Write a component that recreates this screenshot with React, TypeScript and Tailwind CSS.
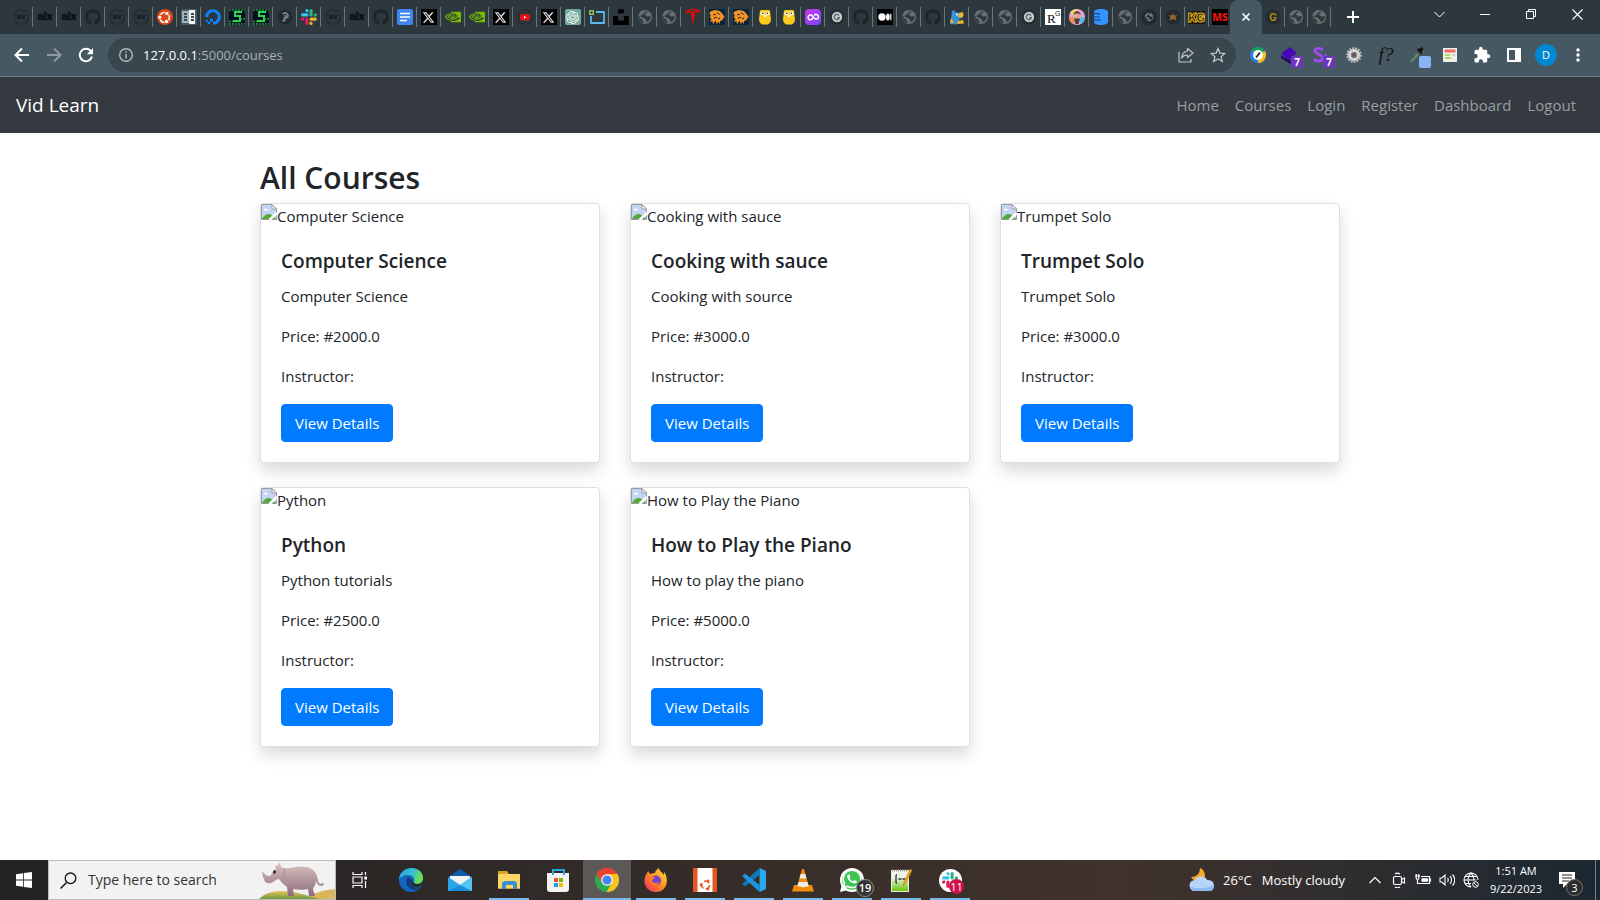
import React from "react";
import {
  FaGithub,
  FaUbuntu,
  FaDigitalOcean,
  FaXTwitter,
  FaUnsplash,
  FaWhatsapp,
} from "react-icons/fa6";
import { SiNvidia, SiOpenai, SiTesla } from "react-icons/si";
import { MdExtension } from "react-icons/md";

const UI_FONT = "font-['Segoe_UI','Open_Sans',sans-serif]";

function Svg({ size = 16, box = 16, label, children }: { size?: number; box?: number; label?: string; children: React.ReactNode }) {
  return (
    <svg width={size} height={size} viewBox={`0 0 ${box} ${box}`} fill="none" role={label ? "img" : undefined} aria-label={label} aria-hidden={label ? undefined : true} className="block shrink-0">
      {children}
    </svg>
  );
}

/* ---------- favicons ---------- */

const AlxRing = () => (
  <Svg>
    <circle cx="8" cy="8" r="7.2" stroke="#1f272b" strokeWidth="1.3" strokeDasharray="9 1.5" />
    <text x="8" y="10" fontSize="6" fontWeight="800" textAnchor="middle" fill="#13181a" fontFamily="Inter, sans-serif">alx</text>
  </Svg>
);
const Alx = () => (
  <Svg>
    <text x="8" y="11" fontSize="10" fontWeight="900" textAnchor="middle" fill="#0f1214" stroke="#0f1214" strokeWidth=".4" fontFamily="Inter, sans-serif">alx</text>
  </Svg>
);
const Github = () => <FaGithub size={16} color="#1d2427" />;
const Ubuntu = () => (
  <span className="flex size-4 items-center justify-center rounded-full bg-[#dd4814]">
    <FaUbuntu size={13} color="#fff" />
  </span>
);
const Panels = () => (
  <Svg>
    <path d="M0 0h16v16H0z" fill="#4b5a63" />
    <path d="M1 2h7v12H1z" fill="#9fb4c0" />
    <path d="M8 1h6v14H8z" fill="#f4f6f7" />
    <path d="M3 4h3v2H3zM3 7h3v2H3zM3 10h3v2H3zM10 4h3v2h-3zM10 7h3v2h-3zM10 10h3v2h-3z" fill="#3c474e" />
  </Svg>
);
const Ocean = () => <FaDigitalOcean size={16} color="#0a84ff" />;
const GreenS = () => (
  <Svg>
    <path d="M0 0h16v16H0z" fill="#08101f" />
    <path d="M0 1h16M0 12.500h5M11 10h5M0 15h16" stroke="#239844" strokeWidth="1.600" strokeDasharray="2 1" />
    <path d="M13 3H6v4h5v5H4" stroke="#2bd450" strokeWidth="2" />
  </Svg>
);
const Curl = () => (
  <Svg>
    <circle cx="8" cy="8" r="7.500" fill="#222a2e" />
    <path d="M6 4.500c4-1.500 6.500 2 4 4l-3 1M7.500 7H9M6 12l2-1" stroke="#8a9195" strokeWidth="1.500" strokeLinecap="round" />
  </Svg>
);
const SlackMark = () => (
  <g>
    <path d="M5.900 0a1.600 1.600 0 0 0 0 3.200h1.600V1.600A1.600 1.600 0 0 0 5.900 0zM1.700 4.300h4.200a1.600 1.600 0 0 1 0 3.200H1.700a1.600 1.600 0 0 1 0-3.200z" fill="#36c5f0" />
    <path d="M16 5.900a1.600 1.600 0 0 0-3.200 0v1.600h1.600A1.600 1.600 0 0 0 16 5.900zM11.700 1.700v4.200a1.600 1.600 0 0 1-3.200 0V1.700a1.600 1.600 0 0 1 3.200 0z" fill="#2eb67d" />
    <path d="M10.100 16a1.600 1.600 0 0 0 0-3.200H8.500v1.600a1.600 1.600 0 0 0 1.600 1.600zM14.300 11.700h-4.200a1.600 1.600 0 0 1 0-3.200h4.200a1.600 1.600 0 0 1 0 3.200z" fill="#ecb22e" />
    <path d="M0 10.100a1.600 1.600 0 0 0 3.200 0V8.500H1.600A1.600 1.600 0 0 0 0 10.100zM4.300 14.300v-4.200a1.600 1.600 0 0 1 3.200 0v4.200a1.600 1.600 0 0 1-3.200 0z" fill="#e01e5a" />
  </g>
);
const Slack = () => <Svg><SlackMark /></Svg>;
const Docs = () => (
  <Svg>
    <rect width="16" height="16" rx="2" fill="#4285f4" />
    <path d="M3 4.500h10M3 8h10M3 11.500h7" stroke="#fff" strokeWidth="1.600" />
  </Svg>
);
const XTab = () => (
  <span className="flex size-4 items-center justify-center bg-black">
    <FaXTwitter size={13} color="#e8e8e8" />
  </span>
);
const Nvidia = () => <SiNvidia size={16} color="#76b900" />;
const Tube = () => (
  <Svg>
    <circle cx="8" cy="8" r="7.200" stroke="#222b2f" strokeWidth="1.300" strokeDasharray="9 1.500" />
    <rect x="3" y="5" width="10" height="6.500" rx="2" fill="#e01212" />
    <path d="M7 7l2.500 1.200L7 9.500z" fill="#fff" />
  </Svg>
);
const Gpt = () => (
  <span className="flex size-4 items-center justify-center rounded-xs bg-[#74aa9c]">
    <SiOpenai size={13} color="#fff" />
  </span>
);
const Frame = () => (
  <Svg>
    <path d="M7 3h8v11H2V7" stroke="#5db5ea" strokeWidth="1.800" />
    <rect x="0.800" y="1.800" width="3.500" height="3.500" fill="#2d383e" stroke="#9bd15b" strokeWidth="1.300" />
  </Svg>
);
const Unsplash = () => <FaUnsplash size={18} color="#000" />;
const GlobeShape = ({ ball, land }: { ball: string; land: string }) => (
  <g>
    <circle cx="8" cy="8" r="7" fill={ball} />
    <path d="M10.500 2.500c-.5 1.800-2.500 1.500-2.800 3 1.800.4 1.600 1.800 2.600 2 1.500.3 2.400-.8 3.500-.2.200 2-1 4.700-3.800 5.700-.3-1.400-1.600-1.600-1.700-3C8 8.600 5.500 9.200 4.500 8 4 7.400 3 7.300 2.200 7.500c0 2.200 1.600 2.400 2.800 3 .9.500.6 1.700 1.800 3l-1 .5C2.500 13 1 10.500 1.200 7.500 1.500 7 3 6.600 4.300 6.600c1.500 0 1-1.600 2-2.100 1-.6 1.500-1.500 2.700-2.300z" fill={land} />
  </g>
);
const Globe = () => <Svg><GlobeShape ball="#6a6e71" land="#2f393e" /></Svg>;
const DimGlobe = () => (
  <span className="flex size-4 items-center justify-center rounded-full bg-[#222b2f]">
    <Svg size={10}><GlobeShape ball="#73797d" land="#222b2f" /></Svg>
  </span>
);
const Tesla = () => <SiTesla size={16} color="#e00b0b" />;
const Splat = () => (
  <Svg>
    <path d="M0 0h16v16H0z" fill="#06263f" />
    <path d="M1 3c3-2.500 8-2.500 11 0l3.500 4.500-2.500 4-2 .5v3l-2-2.500L8 15.500l-1.500-4L4 15.500 3.500 12 1 13l1.500-3L.5 8l1.500-1L.5 5z" fill="#f8931f" />
    <path d="M4 6l3-1M8 3.500l2.500 2M5 9.500L8 8M9 10l2-1" stroke="#06263f" />
  </Svg>
);
const Chick = () => (
  <Svg>
    <path d="M3 1.500L5 1h6l2 .5 1 9c0 3-2 4-3 5H5c-1-1-3-2-3-5z" fill="#fbc91b" />
    <circle cx="5.500" cy="4.500" r="2" fill="#fff6d0" />
    <circle cx="10.500" cy="4.500" r="2" fill="#fff6d0" />
    <circle cx="5.800" cy="4.300" r=".8" fill="#222" />
    <circle cx="10.200" cy="4.300" r=".8" fill="#222" />
    <path d="M6.500 6h3L8 9z" fill="#fff" />
  </Svg>
);
const Purple = () => (
  <Svg>
    <defs><linearGradient id="loop" x1="0" y1="0" x2="1" y2="1"><stop offset="0" stopColor="#c637e8" /><stop offset="1" stopColor="#7a45ff" /></linearGradient></defs>
    <rect width="16" height="16" rx="4" fill="url(#loop)" />
    <path d="M7.500 9.500c-1.500 2-4.500 1.500-4.500-1s3-3.500 4.500-1.500L9 9c1.500 2 4.500 1 4.500-1S11 4.500 9.500 6" stroke="#fff" strokeWidth="1.500" strokeLinecap="round" />
  </Svg>
);
const GBall = () => (
  <Svg>
    <circle cx="8" cy="8" r="7.500" fill="#232c30" />
    <circle cx="8" cy="8" r="5.200" fill="#c3c7c9" />
    <path d="M10 6.500a2.600 2.600 0 1 0 .3 2.200H8.300" stroke="#596064" strokeWidth="1.200" />
  </Svg>
);
const Medium = () => (
  <Svg>
    <path d="M0 0h16v16H0z" fill="#000" />
    <circle cx="5" cy="8" r="3.700" fill="#fff" />
    <ellipse cx="10.900" cy="8" rx="1.800" ry="3.500" fill="#fff" />
    <path d="M13.800 4.800v6.400" stroke="#fff" strokeWidth="1.200" />
  </Svg>
);
const Hound = () => (
  <Svg>
    <path d="M3 2l2-1 1 2 3 .5L13 5l1.500 1-1 3-3.500 1 1 4-4 1.500L1 15l1-5z" fill="#3b8fd4" />
    <path d="M10 4l4-1 .5 4-2 1.500L9 8z" fill="#f0b429" />
    <path d="M2 9l3 5H1zM9 12l5-1 1 3.500-7 .5z" fill="#f0b429" />
    <path d="M7 5.500h2" stroke="#fff" strokeWidth="1.400" />
  </Svg>
);
const Rg = () => (
  <Svg>
    <path d="M0 0h16v16H0z" fill="#fff" />
    <text x="2" y="14" fontSize="13" fill="#111" fontFamily="Liberation Serif, serif">R</text>
    <text x="10" y="7" fontSize="7" fill="#111" fontFamily="Liberation Sans, sans-serif">G</text>
  </Svg>
);
const Face = () => (
  <Svg>
    <circle cx="8" cy="8" r="8" fill="#e7a0dc" />
    <path d="M8 8L1 4a8 8 0 0 1 7-4z" fill="#f2d26b" />
    <path d="M8 8H0a8 8 0 0 0 4 7z" fill="#f08a5c" />
    <path d="M8 8l4 7a8 8 0 0 0 4-7z" fill="#5cb7e8" />
    <ellipse cx="8" cy="8" rx="3.600" ry="5" fill="#d9a98c" />
    <path d="M4.500 6C4.500 1 11.500 1 11.500 6L10 4.500H6z" fill="#4a3a3a" />
    <path d="M5 9.500h6L9.500 15h-3z" fill="#4a3a3a" />
  </Svg>
);
const Stack = () => (
  <Svg>
    <path d="M1 3c0-4 14-4 14 0v10c0 4-14 4-14 0z" fill="#3393ff" />
    <path d="M0 4.500h5l2 1M1 8h6M0 11h8" stroke="#123f86" strokeWidth="1.200" />
  </Svg>
);
const DimStar = () => (
  <Svg>
    <circle cx="8" cy="8" r="7.500" fill="#242b2e" />
    <path d="M8 4l1 2.500 3-.5-1.500 2.500 1 3L8 10l-3.500 1.500 1-3L4 6l3 .5z" fill="#93682b" />
  </Svg>
);
const Kg = () => (
  <Svg size={17}>
    <path d="M0 2h15.500v12H1z" fill="#181408" />
    <text x="8" y="12.500" fontSize="11" fontWeight="900" textAnchor="middle" fill="#181408" stroke="#e2b22a" strokeWidth="1" fontFamily="Inter, sans-serif">KG</text>
  </Svg>
);
const Ms = () => (
  <Svg>
    <path d="M0 0h16v16H0z" fill="#000" />
    <text x="8" y="12" fontSize="10" fontWeight="800" textAnchor="middle" fill="#e01212" fontFamily="Open Sans, sans-serif">MS</text>
  </Svg>
);
const GoldG = () => (
  <Svg>
    <circle cx="8" cy="8" r="7.500" fill="#242d31" />
    <text x="8" y="11.500" fontSize="10" fontWeight="700" textAnchor="middle" fill="#b98a1c" fontFamily="Inter, sans-serif">G</text>
  </Svg>
);

type Tab = [string, React.FC];
const tabs: Tab[] = [
  ["alx", AlxRing], ["alx", Alx], ["alx", Alx], ["GitHub", Github], ["alx", AlxRing], ["alx", AlxRing],
  ["Ubuntu", Ubuntu], ["Panels", Panels], ["DigitalOcean", Ocean], ["Sheet", GreenS], ["Sheet", GreenS],
  ["Reader", Curl], ["Slack", Slack], ["alx", AlxRing], ["alx", Alx], ["GitHub", Github], ["Docs", Docs],
  ["X", XTab], ["NVIDIA", Nvidia], ["NVIDIA", Nvidia], ["X", XTab], ["YouTube", Tube], ["X", XTab],
  ["ChatGPT", Gpt], ["Frame", Frame], ["Unsplash", Unsplash], ["Site", Globe], ["Site", Globe],
  ["Tesla", Tesla], ["Splat", Splat], ["Splat", Splat], ["Chick", Chick], ["Chick", Chick],
  ["Loop", Purple], ["G", GBall], ["GitHub", Github], ["Medium", Medium], ["Site", Globe], ["GitHub", Github],
  ["Hound", Hound], ["Site", Globe], ["Site", Globe], ["G", GBall], ["ResearchGate", Rg], ["Profile", Face],
  ["Stack", Stack], ["Site", Globe], ["Site", DimGlobe], ["Star", DimStar], ["KG", Kg],
];
const trailingTabs: Tab[] = [["G", GoldG], ["Site", Globe], ["Site", Globe]];

function TabButton({ tab }: { tab: Tab }) {
  const Icon = tab[1];
  return (
    <button type="button" aria-label={tab[0]} className="flex h-5 w-6 min-w-0 items-center justify-center border-r border-[#68757b]">
      <Icon />
    </button>
  );
}

function TabStrip() {
  return (
    <div className="flex h-[34px] items-center overflow-hidden bg-[#2d383e] pl-[9px]">
      {tabs.map((t, i) => <TabButton key={i} tab={t} />)}
      <button type="button" aria-label="MS" className="flex h-5 w-[21px] items-center justify-center"><Ms /></button>
      <div className="flex h-full w-8 shrink-0 items-center justify-center rounded-t-lg bg-[#465861]">
        <button type="button" aria-label="Close tab">
          <Svg size={10} box={10}><path d="M1.500 1.500l7 7M8.500 1.500l-7 7" stroke="#fff" strokeWidth="1.700" /></Svg>
        </button>
      </div>
      <div className="flex">
        {trailingTabs.map((t, i) => {
          const Icon = t[1];
          return (
            <button key={i} type="button" aria-label={t[0]} className="flex h-5 w-[23px] items-center justify-center border-r border-[#68757b]">
              <Icon />
            </button>
          );
        })}
      </div>
      <button type="button" aria-label="New tab" className="flex h-8 w-11 items-center justify-center">
        <Svg size={12} box={12}><path d="M6 0v12M0 6h12" stroke="#fff" strokeWidth="2" /></Svg>
      </button>
      <div className="ml-auto flex self-start">
        <button type="button" aria-label="Search tabs" className="flex h-7 w-[46px] items-center justify-center">
          <Svg size={11} box={11}><path d="M.5 3l5 5 5-5" stroke="#fff" /></Svg>
        </button>
        <button type="button" aria-label="Minimize" className="flex h-7 w-[46px] items-center justify-center">
          <Svg size={10} box={10}><path d="M0 5.500h10" stroke="#fff" /></Svg>
        </button>
        <button type="button" aria-label="Restore" className="flex h-7 w-[46px] items-center justify-center">
          <Svg size={10} box={10}><path d="M.5 2.500h7v7h-7zM2.500 2.500v-2h7v7h-2" stroke="#fff" /></Svg>
        </button>
        <button type="button" aria-label="Close" className="flex h-7 w-[46px] items-center justify-center">
          <Svg size={11} box={11}><path d="M.5.5l10 10M10.500.5l-10 10" stroke="#fff" strokeWidth="1.100" /></Svg>
        </button>
      </div>
    </div>
  );
}

function CountBadge() {
  return (
    <span className="absolute -right-1 -bottom-1 flex size-3 items-center justify-center rounded-xs bg-[#6b36bd] text-[10px] leading-3 font-bold text-white">7</span>
  );
}

const extensions: [string, React.ReactNode][] = [
  ["Tag assistant", (
    <Svg>
      <circle cx="8" cy="8" r="8" fill="#2c7be5" />
      <path d="M8 8L1 4a8 8 0 0 1 14 0z" fill="#12a15a" />
      <path d="M8 8l7-4a8 8 0 0 1-7 12z" fill="#fbbc1a" />
      <circle cx="8" cy="8" r="5" fill="#fff" />
      <path d="M6 10.500l4-5" stroke="#222" strokeWidth="1.800" />
    </Svg>
  )],
  ["Layers", (
    <span className="relative">
      <Svg size={18} box={18}>
        <path d="M0 9l9 5 7-4v3l-7 5-9-6z" fill="#280a72" />
        <path d="M0 7.500L9 1l7 6-8 6.500z" fill="#4608ba" />
      </Svg>
      <CountBadge />
    </span>
  )],
  ["Scribe", (
    <span className="relative">
      <Svg size={18} box={18}>
        <path d="M9.500 4.500C8 1.500 2 1.800 2 5s7.500 3 7.500 7-7 4-8.500 1" stroke="#a04cf2" strokeWidth="2.800" />
        <circle cx="12.500" cy="9" r="1.200" fill="#a04cf2" />
      </Svg>
      <CountBadge />
    </span>
  )],
  ["Settings", (
    <Svg>
      <circle cx="8" cy="8" r="6.800" stroke="#c4c4c4" strokeWidth="2" strokeDasharray="1.800 1.200" />
      <circle cx="8" cy="8" r="4.500" stroke="#d5d5d5" strokeWidth="3.200" />
      <circle cx="8" cy="8" r="2.500" fill="#555" stroke="#8a8a8a" />
    </Svg>
  )],
  ["Font finder", <span className="font-['Liberation_Serif',serif] text-[19px] leading-5 text-[#111] italic">f?</span>],
  ["Color picker", (
    <span className="relative">
      <Svg size={18} box={18}>
        <path d="M1 17l1-3 6-7 2 2-6 6z" fill="#5e8a5c" />
        <path d="M8 4l4.500 4.500 1-1.200-1-1.300 2-3-2-2-2.500 2-1.200-.8z" fill="#111" />
      </Svg>
      <span className="absolute -right-1 -bottom-1 size-3 rounded-xs bg-[#8ab4f8]" />
    </span>
  )],
  ["Reader", (
    <Svg>
      <rect x="1" y="1" width="14" height="14" fill="#f0eee8" />
      <path d="M2.500 2.500h11v3h-11z" fill="#f06a63" />
      <path d="M3 8h5M3 11h6" stroke="#9ccf3d" strokeWidth="1.600" />
      <path d="M9.500 8h4" stroke="#c9c9c9" strokeWidth="1.600" />
    </Svg>
  )],
  ["Extensions", <MdExtension size={18} color="#fff" />],
  ["Side panel", (
    <Svg size={14} box={14}>
      <path d="M1 1h12v12H1z" stroke="#fff" strokeWidth="2" />
      <path d="M8 1h5v12H8z" fill="#fff" />
    </Svg>
  )],
  ["Profile", <span className="flex size-[22px] items-center justify-center rounded-full bg-[#0288d1] text-[11px] leading-4 text-white">D</span>],
  ["Menu", <Svg><circle cx="8" cy="3" r="1.700" fill="#fff" /><circle cx="8" cy="8" r="1.700" fill="#fff" /><circle cx="8" cy="13" r="1.700" fill="#fff" /></Svg>],
];

function Toolbar() {
  return (
    <div className="flex h-[43px] items-center border-b border-[#72828a] bg-[#465861] pr-1.5 pl-1.5">
      <button type="button" aria-label="Back" className="flex size-8 items-center justify-center">
        <Svg><path d="M15 8H2M8 1.500L1.500 8 8 14.500" stroke="#fff" strokeWidth="2" /></Svg>
      </button>
      <button type="button" aria-label="Forward" className="flex size-8 items-center justify-center">
        <Svg><path d="M1 8h13M8 1.500L14.500 8 8 14.500" stroke="#8d999f" strokeWidth="2" /></Svg>
      </button>
      <button type="button" aria-label="Reload" className="flex size-8 items-center justify-center">
        <Svg><path d="M14 9.500A6.200 6.200 0 1 1 12.600 3.800L14.500 6" stroke="#fff" strokeWidth="2" /><path d="M15 1v6.200H8.800z" fill="#fff" /></Svg>
      </button>
      <div className="ml-1.5 flex h-[34px] min-w-0 flex-1 items-center rounded-full bg-[#39464d] pr-2.5 pl-[11px]">
        <Svg size={14} box={14}>
          <circle cx="7" cy="7" r="6.300" stroke="#b4babd" strokeWidth="1.400" />
          <path d="M7 6v4.500M7 3.300v1.500" stroke="#b4babd" strokeWidth="1.500" />
        </Svg>
        <a href="#courses" className="ml-2.5 flex-1 text-[13px] leading-5 text-[#a9b0b3]"><span className="text-white">127.0.0.1</span>:5000/courses</a>
        <button type="button" aria-label="Share" className="mr-4">
          <Svg>
            <path d="M1 4.500V15h12v-3" stroke="#bfc5c8" strokeWidth="1.200" />
            <path d="M9.500 1.500L15 6l-5.500 4.500V8C7 8 5 9 3.500 11 4 7.500 6 4.500 9.500 4z" stroke="#bfc5c8" strokeWidth="1.200" strokeLinejoin="round" />
          </Svg>
        </button>
        <button type="button" aria-label="Bookmark">
          <Svg><path d="M8 1.600l1.900 4.500 4.900.4-3.700 3.200 1.100 4.800L8 12l-4.200 2.500 1.100-4.800L1.200 6.500l4.900-.4z" stroke="#bfc5c8" strokeWidth="1.300" /></Svg>
        </button>
      </div>
      <div className="ml-1.5 flex">
        {extensions.map(([name, icon]) => (
          <button key={name} type="button" aria-label={name} className="flex size-8 items-center justify-center">{icon}</button>
        ))}
      </div>
    </div>
  );
}

/* ---------- page ---------- */

function Navbar() {
  const links = ["Home", "Courses", "Login", "Register", "Dashboard", "Logout"];
  return (
    <nav className="flex h-14 items-center justify-between bg-[#343a40] px-4">
      <a href="#home" className="text-[19px] leading-[30px] text-white">Vid Learn</a>
      <ul className="flex">
        {links.map((l) => (
          <li key={l}><a href={"#" + l.toLowerCase()} className="block px-2 text-[15px] leading-6 text-[#9a9da0]">{l}</a></li>
        ))}
      </ul>
    </nav>
  );
}

interface Course { title: string; description: string; price: string }
const courses: Course[] = [
  { title: "Computer Science", description: "Computer Science", price: "2000.0" },
  { title: "Cooking with sauce", description: "Cooking with source", price: "3000.0" },
  { title: "Trumpet Solo", description: "Trumpet Solo", price: "3000.0" },
  { title: "Python", description: "Python tutorials", price: "2500.0" },
  { title: "How to Play the Piano", description: "How to play the piano", price: "5000.0" },
];

function BrokenImage() {
  return (
    <Svg>
      <path d="M.5.500h10.500l4.500 4.500v10.500H.5z" fill="#c3d5f5" stroke="#9a9a9a" />
      <path d="M11 .5v4.500h4.500z" fill="#fff" stroke="#9a9a9a" />
      <path d="M3 6c0-1.500 2-2 2.500-.8C7 4.800 7.500 6 7 6.500H3z" fill="#fff" />
      <path d="M1 15c1.500-3 4-5 6.500-5 2 0 5 2 7.500 5z" fill="#54a83a" />
      <path d="M8.500 16l7.500-7" stroke="#fff" strokeWidth="2.500" />
    </Svg>
  );
}

function CourseCard({ course }: { course: Course }) {
  return (
    <article className="rounded border border-[#dfdfdf] bg-white shadow-[0_8px_16px_rgba(0,0,0,0.15)]">
      <div className="flex h-6 text-[15px] leading-6"><BrokenImage /><span>{course.title}</span></div>
      <div className="p-5">
        <h2 className="mb-2.5 text-[19px] leading-[26px] font-semibold">{course.title}</h2>
        <p className="mb-4 text-[15px] leading-6">{course.description}</p>
        <p className="mb-4 text-[15px] leading-6">Price: #{course.price}</p>
        <p className="mb-4 text-[15px] leading-6">Instructor:</p>
        <a href="#details" className="inline-block rounded border border-[#007bff] bg-[#007bff] px-[13px] py-1.5 align-top text-[15px] leading-6 text-white">View Details</a>
      </div>
    </article>
  );
}

/* ---------- taskbar ---------- */

function Rhino() {
  return (
    <svg width="76" height="38" viewBox="0 0 76 38" aria-hidden="true" className="block shrink-0">
      <defs>
        <linearGradient id="hill" x1="0" y1="0" x2="0" y2="1"><stop offset="0" stopColor="#e6c35c" /><stop offset="1" stopColor="#6f9a45" /></linearGradient>
        <linearGradient id="hide" x1="0" y1="0" x2="0" y2="1"><stop offset="0" stopColor="#dcc5be" /><stop offset="1" stopColor="#8d6c7c" /></linearGradient>
      </defs>
      <path d="M46 38c8-6 18-9 30-10v10z" fill="#d9b65a" />
      <path d="M0 38c8-8 20-9 34-7 12 2 18 5 26 7z" fill="url(#hill)" />
      <path d="M3 10c2 3 5 5 8 5 2-3 4-6 6-7l-1-3 3-1 2-3 1 5c5 2 9 1 14 0 10-2 20 1 22 9 1 4 1 6 3 8l3-1 1 1-2 2c-4 0-5-3-6-5 0 4-2 5-3 8l2 7h-6l-1-7c-4 1-10 1-15 0l1 7h-6l-1-9c-3-2-6-5-8-8-3 0-5 3-8 4-4 1-7-1-7-4-1-2-2-4-2-8z" fill="url(#hide)" />
      <circle cx="15.500" cy="11" r="1.700" fill="#3c3038" />
      <path d="M25 8c1 5 0 8-2 11" stroke="#a98c94" fill="none" />
    </svg>
  );
}

const taskApps: { name: string; running?: boolean; active?: boolean; icon: React.ReactNode }[] = [
  { name: "Edge", icon: (
    <Svg size={24} box={24}>
      <defs><linearGradient id="edge" x1="0" y1="0" x2="1" y2=".3"><stop offset="0" stopColor="#2a9be0" /><stop offset=".6" stopColor="#35c1d6" /><stop offset="1" stopColor="#6be04e" /></linearGradient></defs>
      <circle cx="12" cy="12" r="12" fill="#1266bd" />
      <path d="M0 12C1-4 24-3 24 10c0 4-3 6-6 6-3 0-4-1-3-3 1-1 0-6-6-6-4 0-8 2-9 5z" fill="url(#edge)" />
      <path d="M9 9c-4 4-1 12 5 13 3 .6 6-.5 8-3-3 1.500-7 1-8-2-1-2-1-3 0-4-1-2-2-3-5-4z" fill="#123f84" />
      <path d="M15 13c-1 2 0 3 3 3 3 0 5-1 6-4-.5 3-1 5-2 6-3 2-8 2-9-2-.3-1.500 1-2 2-3z" fill="#2c2a2a" />
    </Svg>
  ) },
  { name: "Mail", icon: (
    <Svg size={24} box={24}>
      <path d="M0 9L12 1l12 8v3H0z" fill="#0d5cab" />
      <path d="M2 8h20v10H2z" fill="#f3f3f3" />
      <path d="M0 9l12 8 12-8v14H0z" fill="#2aa5ea" />
      <path d="M12 17L24 9v14H20z" fill="#56c4f7" /><path d="M0 23l12-6 12 6z" fill="#1b8bdb" />
    </Svg>
  ) },
  { name: "File Explorer", running: true, icon: (
    <Svg size={24} box={24}>
      <path d="M1 3h9l2 3h11v15H1z" fill="#e0a425" /><path d="M1 6h22v14H1z" fill="#fbd568" />
      <path d="M5 21v-6l2-2h11l2 2v6h-4v-4H9v4z" fill="#3c8fd0" />
    </Svg>
  ) },
  { name: "Store", icon: (
    <Svg size={24} box={24}>
      <path d="M1 5h22v16c0 2-1 3-3 3H4c-2 0-3-1-3-3z" fill="#f3f3f3" />
      <path d="M7 7V2h11v5" stroke="#29a6e4" strokeWidth="2" />
      <path d="M8 10h4v4H8z" fill="#e8502c" /><path d="M13 10h4v4h-4z" fill="#7cb80a" /><path d="M8 15h4v4H8z" fill="#1ba1e6" /><path d="M13 15h4v4h-4z" fill="#fdb80c" />
    </Svg>
  ) },
  { name: "Chrome", running: true, active: true, icon: (
    <Svg size={24} box={24}>
      <circle cx="12" cy="12" r="12" fill="#2da94f" />
      <path d="M1.600 6a12 12 0 0 1 20.800 0L17 12H7z" fill="#ea4335" />
      <path d="M22.400 6A12 12 0 0 1 11.500 24L17.500 13 12 6z" fill="#fcc31e" />
      <path d="M12 6h10.400A12 12 0 0 0 1.600 6L7 15z" fill="#ea4335" />
      <circle cx="12" cy="12" r="5.800" fill="#fff" /><circle cx="12" cy="12" r="4.600" fill="#4285f4" />
    </Svg>
  ) },
  { name: "Firefox", running: true, icon: (
    <Svg size={24} box={24}>
      <defs><linearGradient id="fox" x1="1" y1="0" x2="0" y2="1"><stop offset="0" stopColor="#ffe83c" /><stop offset=".5" stopColor="#ff8a1c" /><stop offset="1" stopColor="#f5226e" /></linearGradient></defs>
      <path d="M3 5l1-2 2 3c2-1 4-1 5-1 0-2 2-4 4-5 0 3 3 4 5 7V4c5 6 4 20-8 20C2 24-3 14 3 5z" fill="url(#fox)" />
      <circle cx="12" cy="12.500" r="5" fill="#7443d6" />
      <path d="M5 9c3-1 5 0 6 1l-3 2c0 3 4 4 7 2-1 5-9 5-10-1z" fill="#ff7a26" />
    </Svg>
  ) },
  { name: "Ubuntu", running: true, icon: (
    <Svg size={24} box={24}>
      <path d="M0 0h24v24H0z" fill="#e95420" /><path d="M4.500 0h15v24h-15z" fill="#fff" />
      <circle cx="12.500" cy="17" r="4" stroke="#e95420" strokeWidth="1.600" strokeDasharray="6 2.300" />
      <circle cx="8" cy="17" r="1.400" fill="#e95420" /><circle cx="15" cy="12.800" r="1.400" fill="#e95420" /><circle cx="15" cy="21" r="1.400" fill="#e95420" />
    </Svg>
  ) },
  { name: "Visual Studio Code", running: true, icon: (
    <Svg size={24} box={24}>
      <path d="M17.500 0L24 3v18l-6.500 3z" fill="#29a8f2" />
      <path d="M17.500 0v7L3 18.500 0 16z" fill="#1177bd" /><path d="M17.500 24v-7L3 5.500 0 8z" fill="#1c93de" />
    </Svg>
  ) },
  { name: "VLC", running: true, icon: (
    <Svg size={24} box={24}>
      <path d="M3 17h18l2 6.500H1z" fill="#f28a0c" />
      <path d="M11 1h2l5 18c-3 2-9 2-12 0z" fill="#f28a0c" />
      <path d="M9.700 6h4.600l1.200 4.500h-7zM7.500 14h9l1.200 4c-3 1.500-8 1.500-11.400 0z" fill="#ececec" />
    </Svg>
  ) },
  { name: "WhatsApp", running: true, icon: (
    <span className="relative flex size-6">
      <Svg size={24} box={24}><circle cx="12" cy="12" r="12" fill="#fff" /><path d="M0 24l2-8 6 6z" fill="#fff" /><circle cx="12" cy="12" r="10" fill="#3fc351" /></Svg>
      <FaWhatsapp size={22} color="#fff" className="absolute top-0 left-px" />
      <span className="absolute top-[11px] left-4 flex size-[18px] items-center justify-center rounded-full border border-[#8c8c8c] bg-[#333] text-[11px] leading-3 font-semibold text-white">19</span>
    </span>
  ) },
  { name: "Notepad++", running: true, icon: (
    <Svg size={24} box={24}>
      <defs><linearGradient id="note" x1="0" y1="0" x2="0" y2="1"><stop offset=".3" stopColor="#f1f3ee" /><stop offset="1" stopColor="#6cc510" /></linearGradient></defs>
      <path d="M2 2h18v22H2z" fill="#e9efe2" /><path d="M3 3h16v20H3z" fill="url(#note)" />
      <path d="M3 2.500h16" stroke="#9aa09a" strokeWidth="2" strokeDasharray="1 1" />
      <path d="M7 7v8M7 7h1M7 15h1M9.500 11h3M13.500 11h3" stroke="#333" strokeWidth="1.300" />
      <path d="M14 18l1-4 6-13 2 1-6 13z" fill="#f2a91f" stroke="#b9741a" strokeWidth=".5" />
    </Svg>
  ) },
  { name: "Slack", running: true, icon: (
    <span className="relative flex size-6 items-center justify-center">
      <span className="flex size-[23px] items-center justify-center rounded-full bg-white"><Svg><SlackMark /></Svg></span>
      <span className="absolute top-[11px] left-[11px] flex size-[15px] items-center justify-center rounded-full bg-[#cf1149] text-[11px] leading-3 text-white">11</span>
    </span>
  ) },
];

const trayIcons: [string, React.ReactNode][] = [
  ["Show hidden icons", <Svg size={12} box={12}><path d="M.5 9L6 3.500 11.500 9" stroke="#fff" strokeWidth="1.200" /></Svg>],
  ["Meet now", <Svg><rect x="2.500" y="4.500" width="8" height="8" rx="1.500" stroke="#fff" strokeWidth="1.200" /><path d="M10.500 7.500l3-1.500v5l-3-1.500M4 2c1.500-1 3.500-1 5 0M4 15c1.500 1 3.500 1 5 0" stroke="#fff" strokeWidth="1.200" /></Svg>],
  ["Battery", <Svg><path d="M6 4.500h8.500v7H4.500M15.500 6.500v3" stroke="#fff" strokeWidth="1.200" /><path d="M6.500 6.200h6.500v3.600H6.500z" fill="#fff" /><path d="M0 4h5M1.200 2v4c0 2 2.600 2 2.600 0V2M2.500 7v4.500H5" stroke="#fff" strokeWidth="1.200" /></Svg>],
  ["Volume", <Svg><path d="M1 6h2l3-3v10L3 10H1zM8.500 6c1 1 1 3 0 4M11 4c2 2 2 6 0 8M13.500 2.500c3 3 3 8 0 11" stroke="#fff" strokeWidth="1.100" /></Svg>],
  ["Network", <Svg><path d="M8 15A7 7 0 1 1 15 8M1 8h12M2 4.500h12M2 11.500h6M8 1C4 5 4 11 8 15M8 1c2.500 2.500 3 4.500 3 7" stroke="#fff" strokeWidth="1.100" /><circle cx="12.500" cy="12.500" r="2.800" stroke="#fff" /><path d="M10.500 10.500l4 4" stroke="#fff" /></Svg>],
];

function Taskbar() {
  return (
    <footer className="flex h-10 items-stretch bg-linear-to-r from-[#232324] via-[#40322c] via-70% to-[#1b2831] text-white">
      <button type="button" aria-label="Start" className="flex w-12 items-center justify-center">
        <Svg><path d="M0 2.200l7-1V7.600H0zM7.800 1.100L16 0v7.600H7.800zM0 8.400h7v6.400l-7-1zM7.800 8.400H16V16l-8.200-1.100z" fill="#fff" /></Svg>
      </button>
      <div className="flex w-72 items-center overflow-hidden border border-[#bdbdbd] bg-[#f2f2f2] pl-[11px]">
        <label htmlFor="taskbar-search" aria-label="Search">
          <Svg size={17} box={17}><circle cx="10.500" cy="6.300" r="5.300" stroke="#111" strokeWidth="1.300" /><path d="M6.500 10.500L.5 16.500" stroke="#111" strokeWidth="1.500" /></Svg>
        </label>
        <input id="taskbar-search" type="text" placeholder="Type here to search" className="ml-[11px] min-w-0 flex-1 bg-transparent text-[14px] leading-5 text-[#333] outline-none placeholder:text-[#333]" />
        <Rhino />
      </div>
      <button type="button" aria-label="Task view" className="mr-[3px] flex w-12 items-center justify-center">
        <Svg><path d="M1 0v2.500h9V0M1 5h9v6H1zM1 16v-2.500h9V16M13.500 0v3M13.500 9v7" stroke="#fff" strokeWidth="1.200" /><path d="M12.300 4.500h2.700v3h-2.700z" fill="#fff" /></Svg>
      </button>
      <div className="flex gap-px">
        {taskApps.map((a) => (
          <button
            key={a.name}
            type="button"
            aria-label={a.name}
            className={"relative flex w-12 items-center justify-center " + (a.active ? "bg-[#5c5856]" : "")}
          >
            {a.icon}
            {a.running && <span className={"absolute bottom-0 h-0.5 bg-[#76b9ed] " + (a.active ? "inset-x-0" : "inset-x-1")} />}
          </button>
        ))}
      </div>
      <div className="ml-auto flex items-center">
        <button type="button" className="mr-[18px] flex items-center text-[13px] leading-5">
          <Svg size={26} box={26}>
            <path d="M11 1c0 5-3 9-9 9 3 6 13 5 14-1 0-4-2-7-5-8z" fill="#f5a623" />
            <path d="M6 24a5.500 5.500 0 0 1 0-11c2-5 10-5 12 0 9-1 9 11 2 11z" fill="#b9d4fa" />
            <path d="M4 24c-2-1-3-3-3-4 8 2 16 2 24-2 0 4-2 6-5 6z" fill="#8fb8f3" />
          </Svg>
          <span className="ml-2">26°C</span><span className="ml-2.5">Mostly cloudy</span>
        </button>
        {trayIcons.map(([name, icon]) => (
          <button key={name} type="button" aria-label={name} className="flex h-10 w-6 items-center justify-center">{icon}</button>
        ))}
        <time dateTime="2023-09-22T01:51" className="ml-1.5 w-[54px] text-center text-[11px] leading-[18px]">
          <span className="block">1:51 AM</span><span className="block">9/22/2023</span>
        </time>
        <button type="button" aria-label="Notifications, 3 new" className="relative ml-2 flex h-10 w-8 justify-center pt-3">
          <Svg><path d="M0 0h16v12H8l-4 4v-4H0z" fill="#fff" /><path d="M3 3h10M3 6h10M3 9h7" stroke="#222" /></Svg>
          <span className="absolute top-[19px] left-[15px] flex size-[17px] items-center justify-center rounded-full border border-[#777] bg-[#2b2b2b] text-[11px] leading-3">3</span>
        </button>
        <span className="ml-3 h-10 w-[5px] border-l border-[#7b7f82]" />
      </div>
    </footer>
  );
}

export default function App() {
  return (
    <div className={`flex min-h-screen flex-col bg-white text-[#212529] ${UI_FONT}`}>
      <header>
        <TabStrip />
        <Toolbar />
        <Navbar />
      </header>
      <main className="mx-auto w-full max-w-[1080px] flex-1 pt-6">
        <h1 className="mb-1 text-[30px] leading-[42px] font-semibold">All Courses</h1>
        <div className="grid grid-cols-3 gap-x-[30px] gap-y-6">
          {courses.map((c) => <CourseCard key={c.title} course={c} />)}
        </div>
      </main>
      <Taskbar />
    </div>
  );
}
